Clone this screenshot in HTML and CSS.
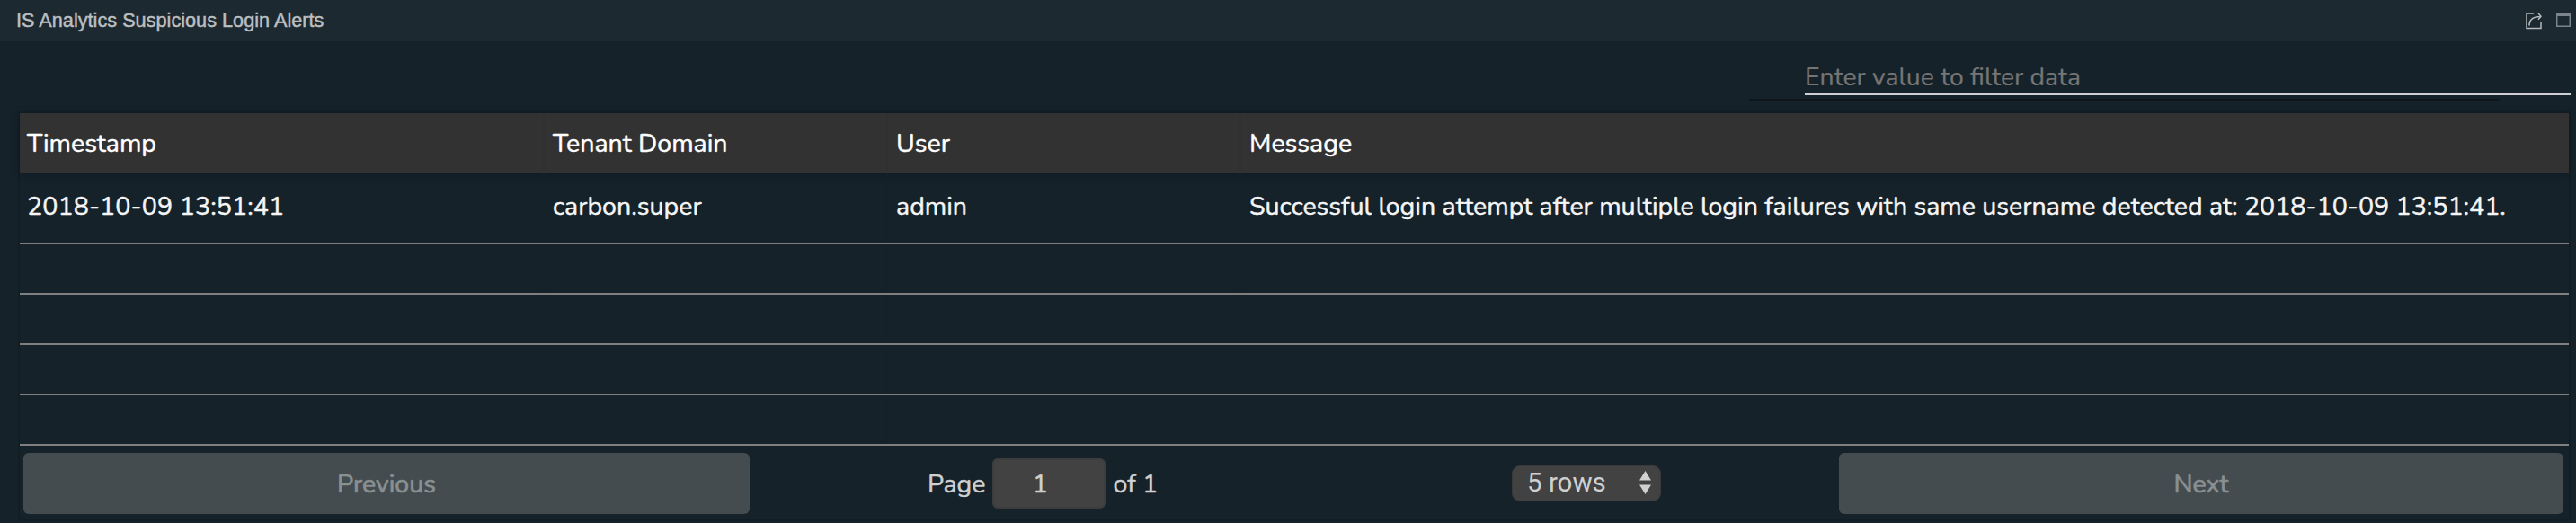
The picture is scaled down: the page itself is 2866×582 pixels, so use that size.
FILE: index.html
```html
<!DOCTYPE html>
<html lang="en">
<head>
<meta charset="utf-8">
<title>IS Analytics Suspicious Login Alerts</title>
<link rel="stylesheet" href="styles.css">
</head>
<body>
<header class="titlebar">
  <h1 class="title">IS Analytics Suspicious Login Alerts</h1>
  <div class="actions">
    <svg class="icon-share" width="18" height="19" viewBox="0 0 18 19" fill="none" stroke="#b3b8ba" stroke-width="1.5"><path d="M9 1H1v16.5h16V10"/><path d="M4 14.5C4 8 8 4.500 16.500 4.500" stroke-width="1.700"/><path d="M14 .8l3 3.500-3 3.500"/></svg>
    <svg class="icon-max" width="17" height="17" viewBox="0 0 17 17"><path d="M0 0h16v16H0zM1.500 4v10.500h13V4z" fill="#7b848a" fill-rule="evenodd"/></svg>
  </div>
</header>
<div class="filter"><input class="filter-input" type="text" placeholder="Enter value to filter data"></div>
<main class="table">
  <div class="row head"><div class="cell">Timestamp</div><div class="cell">Tenant Domain</div><div class="cell">User</div><div class="cell">Message</div></div>
  <div class="row data"><div class="cell date">2018-10-09 13:51:41</div><div class="cell">carbon.super</div><div class="cell">admin</div><div class="cell">Successful login attempt after multiple login failures with same username detected at: 2018-10-09 13:51:41.</div></div>
  <div class="row"><div class="cell"></div><div class="cell"></div><div class="cell"></div><div class="cell"></div></div>
  <div class="row"><div class="cell"></div><div class="cell"></div><div class="cell"></div><div class="cell"></div></div>
  <div class="row"><div class="cell"></div><div class="cell"></div><div class="cell"></div><div class="cell"></div></div>
  <div class="row"><div class="cell"></div><div class="cell"></div><div class="cell"></div><div class="cell"></div></div>
  <div class="pagination">
    <button class="nav" disabled>Previous</button>
    <div class="center">
      <div class="pageinfo"><span>Page</span><input class="page-input" value="1"><span>of 1</span></div>
      <div class="select"><span>5 rows</span><svg width="13" height="26" viewBox="0 0 13 26" fill="#d0d0d0"><path d="M0 10.500L6.500 0 13 10.500zM0 15.500h13L6.500 26z"/></svg></div>
    </div>
    <button class="nav" disabled>Next</button>
  </div>
</main>
</body>
</html>
```
FILE: styles.css
```css
* { box-sizing: border-box; }
body {
  margin: 0;
  height: 582px;
  overflow: hidden;
  background: #15222a;
  color: #f5f5f5;
  font-family: Nunito, Lato, sans-serif;
  font-size: 28.55px;
  -webkit-text-stroke: .45px currentColor;
}
.titlebar {
  height: 46px;
  padding: 0 5px 0 18px;
  display: flex;
  align-items: center;
  justify-content: space-between;
  background: #1c2930;
}
.title {
  margin: 0;
  font: 400 21.7px/46px "Liberation Sans", Arial, sans-serif;
  color: #bcbfc1;
}
.actions { display: flex; gap: 16px; align-items: flex-start; }
.filter {
  height: 80px;
  padding: 18px 6px 0 1946px;
  background: linear-gradient(#0d171c, #0d171c) 1946px 64px / 836px 2px no-repeat;
}
.filter-input {
  display: block;
  width: 852px;
  height: 42px;
  margin-left: 62px;
  padding: 2px 0 0;
  border: 0;
  border-bottom: 2px solid #d0cfd3;
  background: transparent;
  font: inherit;
  font-size: 28.4px;
  outline: 0;
  -webkit-text-stroke: .2px currentColor;
}
.filter-input::placeholder { color: #757575; opacity: 1; }
.table {
  margin: 0 8px 0 22px;
  height: 452px;
  box-shadow: 0 0 0 2px #121e25;
}
.row {
  display: grid;
  grid-template-columns: 584px 382px 393px 1fr;
  height: 56px;
  border-bottom: 2px solid #807f80;
}
.cell {
  display: flex;
  align-items: center;
  padding-left: 9px;
  border-right: 2px solid #13212a;
  white-space: pre;
}
.cell:first-child { padding-left: 8px; }
.cell:last-child { border-right: 0; }
.head {
  height: 66px;
  border-bottom: 0;
  background: #323232;
  color: #fff;
  box-shadow: 0 2px 10px rgba(0, 0, 0, .22);
}
.head .cell { border-color: #303030; padding-top: 1px; }
.data { height: 80px; padding-bottom: 3px; }
.date { letter-spacing: .1px; }
.pagination {
  height: 82px;
  padding: 8px 6px 8px 4px;
  display: flex;
  align-items: flex-start;
}
.nav {
  width: 808px;
  height: 68px;
  border: 0;
  border-radius: 6px;
  background: #454c4f;
  color: #899092;
  font: inherit;
  -webkit-text-stroke: .7px currentColor;
}
.nav:last-child { width: 806px; }
.center { flex: 1; display: flex; height: 68px; padding-left: 198px; color: #cfd0d1; }
.pageinfo { display: flex; align-items: center; gap: 8px; width: 650px; }
.page-input {
  width: 126px;
  height: 56px;
  border: 2px solid #3d3d3d;
  border-radius: 6px;
  background: #424242;
  color: #cfd0d1;
  font: inherit;
  text-align: center;
  padding: 0 20px 0 0;
}
.select {
  width: 166px;
  height: 40px;
  margin-top: 14px;
  padding: 0 10px 2px 16px;
  display: flex;
  align-items: center;
  justify-content: space-between;
  border: 1px solid #3a3a3a;
  border-radius: 9px;
  background: #424242;
  font-family: Roboto, sans-serif;
  font-size: 29.5px;
  -webkit-text-stroke: 0;
}
```
